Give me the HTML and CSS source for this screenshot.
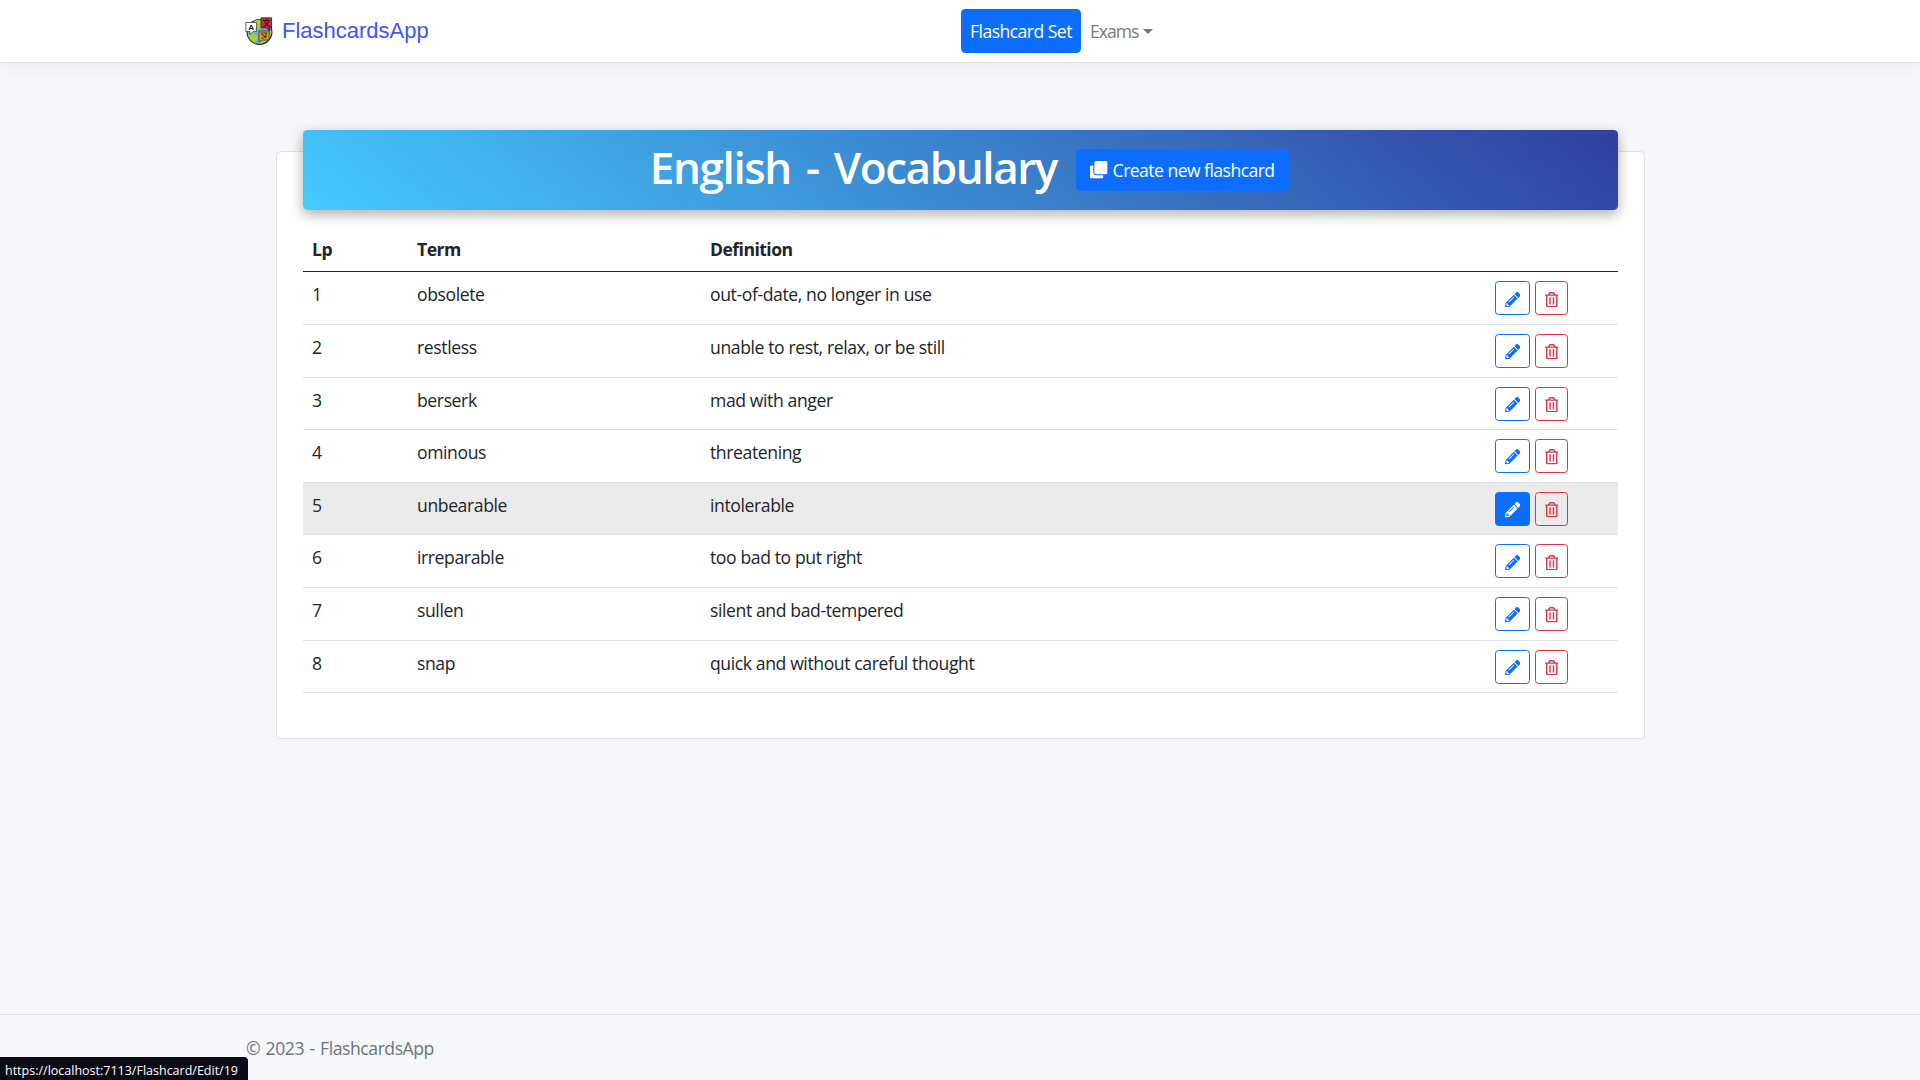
FILE: index.html
```
<!DOCTYPE html>
<html lang="en">
<head>
<meta charset="utf-8">
<title>English - Vocabulary - FlashcardsApp</title>
<link rel="stylesheet" href="styles.css">
</head>
<body>
<svg class="sprite" aria-hidden="true">
  <symbol id="pencil" viewBox="0 0 512 512"><path d="M497.900 142.100l-46.100 46.100c-4.700 4.700-12.300 4.700-17 0l-111-111c-4.700-4.700-4.700-12.300 0-17l46.100-46.100c18.700-18.700 49.100-18.700 67.900 0l60.100 60.100c18.800 18.700 18.800 49.100 0 67.900zM284.200 99.800L21.600 362.400.4 483.900c-2.900 16.400 11.400 30.600 27.800 27.800l121.500-21.300 262.600-262.600c4.700-4.700 4.700-12.300 0-17l-111-111c-4.800-4.700-12.400-4.700-17.100 0zM124.100 339.900c-5.500-5.500-5.500-14.300 0-19.800l154-154c5.500-5.500 14.300-5.500 19.800 0s5.500 14.300 0 19.800l-154 154c-5.500 5.500-14.300 5.500-19.800 0zM88 424h48v36.300l-64.500 11.300-31.100-31.100L51.700 376H88v48z"/></symbol>
  <symbol id="trash" viewBox="0 0 448 512"><path d="M268 416h24a12 12 0 0 0 12-12V188a12 12 0 0 0-12-12h-24a12 12 0 0 0-12 12v216a12 12 0 0 0 12 12zM432 80h-82.410l-34-56.700A48 48 0 0 0 274.410 0H173.590a48 48 0 0 0-41.160 23.300L98.410 80H16A16 16 0 0 0 0 96v16a16 16 0 0 0 16 16h16v336a48 48 0 0 0 48 48h288a48 48 0 0 0 48-48V128h16a16 16 0 0 0 16-16V96a16 16 0 0 0-16-16zM171.840 50.910A6 6 0 0 1 177 48h94a6 6 0 0 1 5.150 2.910L293.610 80H154.390zM368 464H80V128h288zm-212-48h24a12 12 0 0 0 12-12V188a12 12 0 0 0-12-12h-24a12 12 0 0 0-12 12v216a12 12 0 0 0 12 12z"/></symbol>
  <symbol id="clone" viewBox="0 0 512 512"><path d="M464 0c26.510 0 48 21.490 48 48v288c0 26.510-21.490 48-48 48H176c-26.510 0-48-21.490-48-48V48c0-26.510 21.490-48 48-48h288M176 416c-44.112 0-80-35.888-80-80V128H48c-26.510 0-48 21.490-48 48v288c0 26.510 21.490 48 48 48h288c26.510 0 48-21.490 48-48v-48H176z"/></symbol>
</svg>

<header class="navbar">
  <a class="brand">
    <svg class="logo" viewBox="0 0 28 28">
      <circle cx="14.500" cy="15" r="12.400" fill="#6fb1d2" stroke="#26332c" stroke-width="1.200"/>
      <path d="M9 4C12 2.500 15 2.500 16.500 3v6l-3 3H12zM3 17.500l5-1 4 2 1 3-3 2 1 3C7 25 3.500 21 3 17.500zM24 13.500l2.400.5c0 4-2 7-4.500 9.500L16 26.500l-2-2 3-1.500h7z" fill="#a4d233"/>
      <path d="M.8 5.500h10.700v9H8l-3 3v-3H.8z" fill="#fff" stroke="#444" stroke-width=".8"/>
      <path d="M16 .8h10.500v10H24l1 3-4-3h-5z" fill="#e0243f" stroke="#32181c" stroke-width=".8"/>
      <path d="M14 14h10v9h-7l-3 2z" fill="#f6a12d" stroke="#3a2a18" stroke-width=".8"/>
      <text class="glyph" x="6.200" y="12.900" font-size="8">A</text>
      <text class="glyph cjk" x="21.200" y="8.800" font-size="8">文</text>
      <path d="M15.500 16h7M21 16v5.500M16 18q3-1 2.500 1q3 1 0 2q-1.500.5-2.500-.5M18.500 19H21" fill="none" stroke="#222" stroke-width=".9"/>
    </svg>
    <span>FlashcardsApp</span>
  </a>
  <nav class="links">
    <a class="link active">Flashcard Set</a>
    <a class="link dropdown">Exams</a>
  </nav>
</header>

<main class="main">
  <section class="card">
    <div class="banner">
      <h1 class="title">English - Vocabulary</h1>
      <a class="create"><svg class="clone"><use href="#clone"/></svg><span>Create new flashcard</span></a>
    </div>
    <div class="table">
      <div class="row head"><span>Lp</span><span>Term</span><span>Definition</span><span></span></div>
      <div class="row"><span>1</span><span>obsolete</span><span>out-of-date, no longer in use</span><div class="actions"><a class="btn edit"><svg class="i-pencil"><use href="#pencil"/></svg></a><a class="btn delete"><svg class="i-trash"><use href="#trash"/></svg></a></div></div>
      <div class="row"><span>2</span><span>restless</span><span>unable to rest, relax, or be still</span><div class="actions"><a class="btn edit"><svg class="i-pencil"><use href="#pencil"/></svg></a><a class="btn delete"><svg class="i-trash"><use href="#trash"/></svg></a></div></div>
      <div class="row"><span>3</span><span>berserk</span><span>mad with anger</span><div class="actions"><a class="btn edit"><svg class="i-pencil"><use href="#pencil"/></svg></a><a class="btn delete"><svg class="i-trash"><use href="#trash"/></svg></a></div></div>
      <div class="row"><span>4</span><span>ominous</span><span>threatening</span><div class="actions"><a class="btn edit"><svg class="i-pencil"><use href="#pencil"/></svg></a><a class="btn delete"><svg class="i-trash"><use href="#trash"/></svg></a></div></div>
      <div class="row hovered"><span>5</span><span>unbearable</span><span>intolerable</span><div class="actions"><a class="btn edit filled"><svg class="i-pencil"><use href="#pencil"/></svg></a><a class="btn delete"><svg class="i-trash"><use href="#trash"/></svg></a></div></div>
      <div class="row"><span>6</span><span>irreparable</span><span>too bad to put right</span><div class="actions"><a class="btn edit"><svg class="i-pencil"><use href="#pencil"/></svg></a><a class="btn delete"><svg class="i-trash"><use href="#trash"/></svg></a></div></div>
      <div class="row"><span>7</span><span>sullen</span><span>silent and bad-tempered</span><div class="actions"><a class="btn edit"><svg class="i-pencil"><use href="#pencil"/></svg></a><a class="btn delete"><svg class="i-trash"><use href="#trash"/></svg></a></div></div>
      <div class="row"><span>8</span><span>snap</span><span>quick and without careful thought</span><div class="actions"><a class="btn edit"><svg class="i-pencil"><use href="#pencil"/></svg></a><a class="btn delete"><svg class="i-trash"><use href="#trash"/></svg></a></div></div>
    </div>
  </section>
</main>

<footer class="footer">© 2023 - FlashcardsApp</footer>
<div class="status">https://localhost:7113/Flashcard/Edit/19</div>
</body>
</html>
```
FILE: styles.css
```
* { box-sizing: border-box; }

body {
  margin: 0;
  height: 1080px;
  overflow: hidden;
  display: flex;
  flex-direction: column;
  background: #f5f7fb;
  color: #212529;
  font: 17.6px/26.4px "Open Sans", "Noto Sans", sans-serif;
  letter-spacing: -0.4px;
}

.sprite { display: none; }
svg { display: block; flex: none; fill: currentColor; }

/* Top bar */
.navbar {
  height: 63px;
  flex: none;
  display: grid;
  grid-template-columns: 717px 1fr;
  align-items: center;
  padding-left: 244px;
  background: #fff;
  border-bottom: 1px solid #dee2e6;
  box-shadow: 0 4px 13px rgba(0, 0, 0, .055);
}
.brand {
  display: flex;
  align-items: center;
  gap: 9px;
  color: #4154f6;
  font: 22px/28px "Liberation Sans", Arial, sans-serif;
  letter-spacing: 0;
}
.logo { width: 28px; height: 28px; margin-left: 1px; }
.glyph { font-family: "Liberation Sans", sans-serif; font-weight: 700; text-anchor: middle; fill: #222; letter-spacing: 0; }
.cjk { font-family: "Noto Sans CJK SC", sans-serif; }
.links { display: flex; }
.link { height: 44px; padding: 0 9px; line-height: 45px; color: #7a7a7a; white-space: nowrap; }
.link.active {
  width: 120px;
  border-radius: 4.4px;
  background: #0d6efd;
  color: #fff;
  letter-spacing: -0.55px;
}
.link.dropdown { display: flex; align-items: center; gap: 5px; letter-spacing: -1px; }
.dropdown::after {
  content: "";
  border: 5.3px solid transparent;
  border-top-color: #757575;
  border-bottom: 0;
}

/* Flashcard table */
.main { flex: 1; padding: 88px 275px 0 276px; }
.card {
  height: 588px;
  padding: 0 26px;
  background: #fff;
  border: 1px solid #dfe1e5;
  border-radius: 4.4px;
}
.banner {
  height: 80px;
  margin-top: -22px;
  display: flex;
  align-items: center;
  justify-content: flex-end;
  gap: 19px;
  padding-right: 329px;
  border-radius: 4.4px;
  background: linear-gradient(40deg, #45cafc, #303f9f);
  box-shadow: 0 5px 12px rgba(0, 0, 0, .18), 0 4px 16px rgba(0, 0, 0, .15);
  color: #fff;
}
.title { margin: 0 0 6px; font-size: 44px; line-height: 52px; font-weight: 600; letter-spacing: -1.4px; word-spacing: 5px; white-space: nowrap; }
.create {
  height: 42px;
  width: 213px;
  display: flex;
  align-items: center;
  gap: 5px;
  padding-left: 14px;
  background: #0d6efd;
  border-radius: 4.4px;
  letter-spacing: -0.55px;
  white-space: nowrap;
}
.clone { width: 17.6px; height: 17.6px; }

.table { padding-top: 18px; }
.row {
  height: 52.65px;
  display: grid;
  grid-template-columns: 105px 293px 784px 1fr;
  align-items: start;
  padding: 9px 0 0 9px;
  border-bottom: 1px solid #dee2e6;
}
.row.head { height: 44px; margin-bottom: .25px; padding-top: 8px; font-weight: 700; border-color: #212529; letter-spacing: -0.55px; }
.row.hovered { background: #ebebeb; }
.actions { display: flex; gap: 5px; margin-left: 1px; }
.btn {
  height: 34px;
  display: grid;
  place-items: center;
  border: 1px solid;
  border-radius: 3.5px;
}
.edit { width: 35px; color: #0d6efd; }
.edit.filled { background: #0d6efd; color: #fff; border-color: #0d6efd; }
.delete { width: 33px; color: #dc3545; }
.i-pencil { width: 15.4px; height: 15.4px; margin-top: 2px; }
.i-trash { width: 13.5px; height: 15.4px; margin-top: 2px; }

/* Footer and link preview */
.footer {
  height: 66px;
  flex: none;
  padding: 20px 0 0 246px;
  border-top: 1px solid #dee2e6;
  color: #6c757d;
  letter-spacing: -0.45px;
  word-spacing: 1.3px;
}
.status {
  position: absolute;
  left: 0;
  bottom: 0;
  width: 248px;
  height: 23px;
  padding-left: 5px;
  border-radius: 0 4px 0 0;
  background: #0b0b16;
  color: #fff;
  font-size: 12.5px;
  line-height: 27px;
  letter-spacing: 0;
  white-space: nowrap;
}
```
